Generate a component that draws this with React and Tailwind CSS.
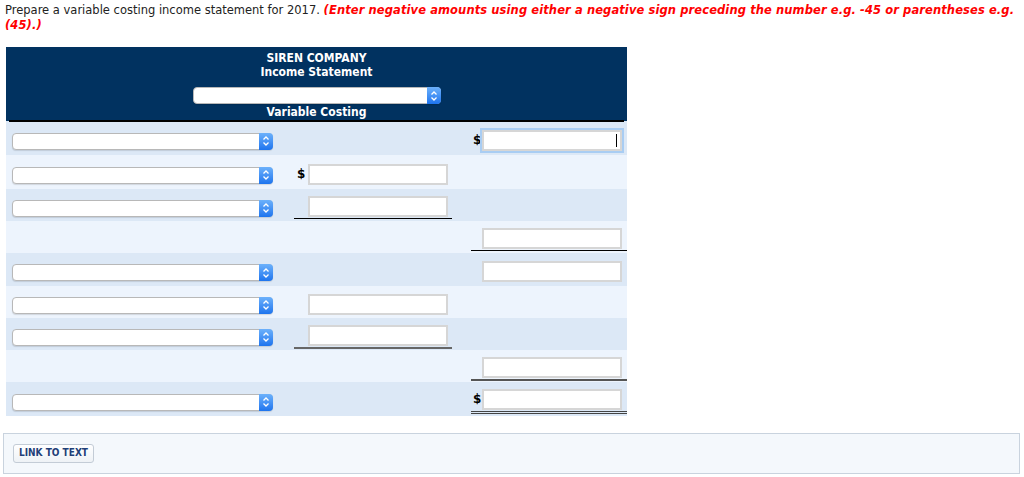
import React from "react";

const font = { fontFamily: '"DejaVu Sans", Verdana, sans-serif' };

function Chevrons() {
  return (
    <svg width="8" height="12" viewBox="0 0 8 12" fill="none">
      <path d="M1.5 4.5 L4 2 L6.5 4.5" stroke="white" strokeWidth="1.3" />
      <path d="M1.5 7.5 L4 10 L6.5 7.5" stroke="white" strokeWidth="1.3" />
    </svg>
  );
}

function Select({ w = "w-[261px]" }) {
  return (
    <div
      className={`flex h-[17px] ${w} rounded-[4px] border border-[#b8b8b8] bg-white shadow-[0_1px_1px_rgba(0,0,0,0.12)]`}
    >
      <div className="flex-1" />
      <div className="-my-px -mr-px flex w-[14px] items-center justify-center rounded-r-[4px] bg-gradient-to-b from-[#6cb1fb] to-[#1c74ee]">
        <Chevrons />
      </div>
    </div>
  );
}

function Input({ focused }) {
  return (
    <div
      className={`relative h-[21px] w-[140px] border-2 border-[#d6d6d6] bg-white ${
        focused ? "border-[#b5d4f3] shadow-[0_0_0_2px_#a9cdf3]" : ""
      }`}
    >
      {focused && <div className="absolute right-[3px] top-[2px] h-[13px] w-px bg-black" />}
    </div>
  );
}

function Dollar() {
  return <span className="mr-[3px] text-[12px] font-bold leading-none text-black">$</span>;
}

// one statement line: left select, middle amount, right amount
function Row({ h, bg, select, mid, right }) {
  return (
    <div className={`flex ${h} ${bg} items-center`}>
      <div className="w-[288px] pl-[6px] pt-[6px]">{select && <Select />}</div>
      <div className="w-[177px]">
        {mid && (
          <div className={`flex w-[158px] items-end pb-px pl-[3px] pt-[2px] ${mid.line || ""}`}>
            <span className={`w-[11px] ${mid.dollar ? "" : "invisible"}`}>
              <Dollar />
            </span>
            <Input />
          </div>
        )}
      </div>
      <div className="flex-1">
        {right && (
          <div className={`flex w-[156px] items-end pb-px pl-[2px] pt-[2px] ${right.line || ""}`}>
            <span className={`w-[9px] ${right.dollar ? "" : "invisible"}`}>
              <Dollar />
            </span>
            <Input focused={right.focused} />
          </div>
        )}
      </div>
    </div>
  );
}

export default function App() {
  const dark = "bg-[#dce8f6]";
  const light = "bg-[#edf4fd]";
  const rows = [
    { h: "h-[34px]", bg: dark, select: true, right: { dollar: true, focused: true } },
    { h: "h-[34px]", bg: light, select: true, mid: { dollar: true } },
    { h: "h-[32px]", bg: dark, select: true, mid: { line: "border-b border-black" } },
    { h: "h-[32px]", bg: light, right: { line: "border-b border-black" } },
    { h: "h-[33px]", bg: dark, select: true, right: {} },
    { h: "h-[32px]", bg: light, select: true, mid: {} },
    { h: "h-[32px]", bg: dark, select: true, mid: { line: "border-b-2 border-[#666]" } },
    { h: "h-[32px]", bg: light, right: { line: "border-b-2 border-[#555]" } },
    { h: "h-[34px]", bg: dark, select: true, right: { dollar: true, line: "border-b-[3px] border-double border-[#444]" } },
  ];

  return (
    <div className="h-[477px] w-[1024px] bg-white" style={font}>
      <div className="px-[5px] pt-[3px] text-[11.5px] leading-[15px] text-[#222]">
        <div className="whitespace-nowrap">
          <span>Prepare a variable costing income statement for 2017. </span>
          <span className="font-bold italic tracking-[0.1px] text-[#ff0000]">
            (Enter negative amounts using either a negative sign preceding the number e.g. -45 or parentheses e.g.
          </span>
        </div>
        <div className="font-bold italic tracking-[0.1px] text-[#ff0000]">(45).)</div>
      </div>

      <div className="ml-[6px] mt-[14px] w-[621px]">
        {/* header */}
        <div className="flex h-[74px] flex-col items-center bg-[#013260] px-[3px] pt-[4px] text-[12px] font-bold leading-[14px] text-white" style={{ fontFamily: '"DejaVu Sans Condensed", "DejaVu Sans", sans-serif' }}>
          <div>SIREN COMPANY</div>
          <div>Income Statement</div>
          <div className="mt-[8px]">
            <Select w="w-[248px]" />
          </div>
          <div className="mt-[1px] w-full border-b-2 border-black pb-[1px] text-center">Variable Costing</div>
        </div>

        {rows.map((r, i) => (
          <Row key={i} {...r} />
        ))}
      </div>

      <div className="mx-[3px] mt-[17px] h-[41px] w-[1017px] border border-[#c9d3de] bg-[#f4f8fc] px-[9px] pt-[5px]">
        <button
          className="h-[19px] rounded-[3px] border border-[#c3ccd6] bg-gradient-to-b from-white to-[#eef2f6] px-[5px] text-[10px] font-bold leading-none text-[#1f3f78]"
          style={{ fontFamily: '"DejaVu Sans Condensed", "DejaVu Sans", sans-serif' }}
        >
          LINK TO TEXT
        </button>
      </div>
    </div>
  );
}
